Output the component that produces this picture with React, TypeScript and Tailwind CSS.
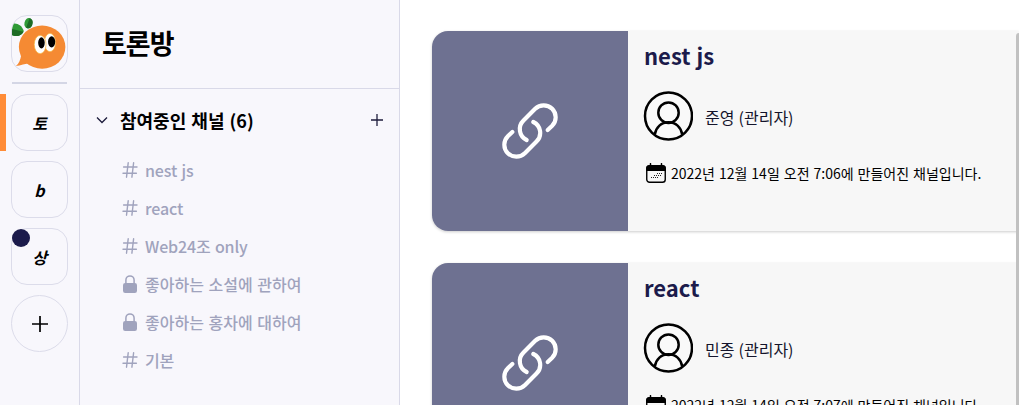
import React from 'react';

type Channel = { name: string; locked?: boolean };

const channels: Channel[] = [
  { name: 'nest js' },
  { name: 'react' },
  { name: 'Web24조 only' },
  { name: '좋아하는 소설에 관하여', locked: true },
  { name: '좋아하는 홍차에 대하여', locked: true },
  { name: '기본' },
];

const cards = [
  { title: 'nest js', owner: '준영', time: '7:06' },
  { title: 'react', owner: '민종', time: '7:07' },
];

const Logo = () => (
  <svg viewBox="36 46 168 168" className="h-full w-full">
    <ellipse cx="128" cy="141" rx="71" ry="66" fill="#f58a33" />
    <path d="M64 166C62 180 57 192 48 199C62 196 77 192 92 190Z" fill="#f58a33" />
    <path d="M36 70C50 65 67 74 72 92C66 109 45 110 36 104Z" fill="#2f9a36" />
    <path d="M36 86L71 94C64 109 45 110 36 104Z" fill="#1d6b25" />
    <ellipse cx="86" cy="68" rx="12" ry="16" transform="rotate(12 86 68)" fill="#2f9a36" />
    <path d="M90 53C101 55 102 69 95 79C91 84 84 85 79 82Z" fill="#1d6b25" />
    <ellipse cx="152" cy="127" rx="17" ry="28" fill="#fff" stroke="#f6b53c" strokeWidth="2" />
    <ellipse cx="122" cy="133" rx="18" ry="28" fill="#fff" stroke="#f6b53c" strokeWidth="2" />
    <ellipse cx="126" cy="128" rx="10" ry="17" fill="#000" />
    <ellipse cx="157" cy="125" rx="11" ry="17" fill="#000" />
  </svg>
);

const Plus = ({ className }: { className: string }) => (
  <svg viewBox="0 0 16 16" className={className} stroke="currentColor" strokeWidth="1.700" fill="none">
    <path d="M8 0V16M0 8H16" />
  </svg>
);

const Hash = () => (
  <svg viewBox="0 0 16 16" className="size-4" stroke="currentColor" strokeWidth="1.400" strokeLinecap="round" fill="none">
    <path d="M6.200.8L4.500 15.200M11.600.8L9.900 15.200M1.600 5H15M1 11.200H14.400" />
  </svg>
);

const Lock = () => (
  <svg viewBox="0 0 14 18" className="h-[18px] w-3.5">
    <path d="M2.900 9V5A4.100 4.100 0 0 1 11.100 5V9" fill="none" stroke="currentColor" strokeWidth="1.500" />
    <rect y="8" width="14" height="10" rx="2.200" fill="currentColor" />
  </svg>
);

const Chain = () => (
  <svg viewBox="247 250 168 168" className="size-14" fill="none" stroke="#fff" strokeWidth="12.500" strokeLinecap="round">
    <path d="M384 331L397.500 318.500A36 36 0 0 0 346.500 267.500L311.500 302.500A36 36 0 0 0 321 361" />
    <path d="M278 337L264.500 349.500A36 36 0 0 0 315.500 400.500L350.500 365.500A36 36 0 0 0 341 307" />
  </svg>
);

const Avatar = () => (
  <svg viewBox="0 0 50 50" className="size-[50px]" fill="none" stroke="#000" strokeWidth="2.500">
    <circle cx="25.500" cy="25" r="23.500" fill="#fff" fillOpacity=".3" />
    <circle cx="25.500" cy="21.700" r="10.200" />
    <path d="M11.800 43.500C13 36 18.300 31.300 25.500 31.300S38 36 39.200 43.500" />
  </svg>
);

const Calendar = () => (
  <svg viewBox="0 0 20 20" className="size-5">
    <rect x=".75" y="2.750" width="18.500" height="16.500" rx="2.800" fill="#f7f7f7" stroke="#000" strokeWidth="1.400" />
    <path d="M.2 8V5.200Q.2 2.200 3.200 2.200H16.800Q19.800 2.200 19.800 5.200V8Z" />
    <path d="M4.500.7V4M15.500.7V4" stroke="#000" strokeWidth="1.500" strokeLinecap="round" />
    <path d="M11 10.500H16M8 12.500H15M5 14.500H13" stroke="#222" strokeWidth="1" strokeDasharray="1 1" />
  </svg>
);

const tile = 'relative flex size-[57px] shrink-0 items-center justify-center border border-[#dcdcea]';

export default function App() {
  return (
    <div className="flex h-[405px] w-[1019px] overflow-hidden bg-white font-['Noto_Sans_CJK_KR','Noto_Sans',sans-serif] text-black">
      <nav className="flex w-20 shrink-0 flex-col items-center gap-2.5 border-r border-[#d9d9e8] bg-[#f8f7fc] pt-[15px]">
        <div className={`${tile} overflow-hidden rounded-[16px]`}><Logo /></div>
        <div className="h-0.5 w-[55px] shrink-0 bg-[#d4d6e5]" />
        {['토', 'b', '상'].map((label, i) => (
          <div key={label} className="relative flex w-full shrink-0 justify-center">
            {i === 0 && <span className="absolute top-0 left-0 h-[57px] w-1.5 bg-[#ff8c37]" />}
            <div className={`${tile} rounded-[16px] text-base font-bold italic`}>
              {label}
              {i === 2 && <span className="absolute top-0 left-0 size-[18px] rounded-full bg-[#1c1b4b]" />}
            </div>
          </div>
        ))}
        <div className={`${tile} rounded-full`}><Plus className="size-4" /></div>
      </nav>

      <aside className="w-80 shrink-0 border-r border-[#d9d9e8] bg-[#f8f7fc]">
        <header className="flex h-[89px] items-center border-b border-[#d9d9e8] pb-0.5 pl-[22px] text-[27px] font-bold tracking-[-1px]">
          <h1>토론방</h1>
        </header>
        <div className="flex h-[62px] items-center pr-4 pl-4">
          <svg viewBox="0 0 12 8" className="h-2 w-3" fill="none" stroke="#1c1b3b" strokeWidth="1.300">
            <path d="M1 1.500L6 6.500L11 1.500" />
          </svg>
          <h2 className="ml-3 flex-1 text-lg font-bold [word-spacing:1px]">참여중인 채널 (6)</h2>
          <Plus className="size-3 text-[#1c1b3b]" />
        </div>
        <ul className="text-base font-medium text-[#a0a3bd]">
          {channels.map((c) => (
            <li key={c.name} className="flex h-[38px] items-center pl-[42px]">
              <span className="flex w-4 justify-center">{c.locked ? <Lock /> : <Hash />}</span>
              <span className={c.locked ? 'ml-[7px] [word-spacing:1px]' : 'ml-[7px] tracking-[-0.15px] [word-spacing:1px]'}>{c.name}</span>
            </li>
          ))}
        </ul>
      </aside>

      <main className="relative flex min-w-0 flex-1 flex-col gap-8 pt-[31px] pl-8">
        {cards.map((c) => (
          <article key={c.title} className="flex h-[200px] shrink-0 overflow-hidden rounded-l-[16px] bg-[#f7f7f7] shadow-[0_1px_3px_rgba(0,0,0,0.2)]">
            <div className="flex w-[196px] shrink-0 items-center justify-center bg-[#6e7191]"><Chain /></div>
            <div className="flex min-w-0 flex-1 flex-col pl-[15px]">
              <h3 className="mt-1.5 h-9 pl-px text-[22px] leading-9 font-bold text-[#1c1b4b] [word-spacing:1px]">{c.title}</h3>
              <div className="mt-[18px] flex h-[50px] items-center text-base text-[#14142b]">
                <Avatar />
                <span className="mt-px ml-3 [word-spacing:0.5px]">{c.owner} (관리자)</span>
              </div>
              <div className="mt-[21px] flex h-[22px] items-center pl-[3px] text-sm">
                <Calendar />
                <span className="ml-[5px] whitespace-nowrap [word-spacing:0.85px]">2022년 12월 14일 오전 {c.time}에 만들어진 채널입니다.</span>
              </div>
            </div>
          </article>
        ))}
        <div className="absolute top-[33px] right-0 bottom-0 w-[3px] rounded-tl-full bg-[#c1c1c1]" />
      </main>
    </div>
  );
}
